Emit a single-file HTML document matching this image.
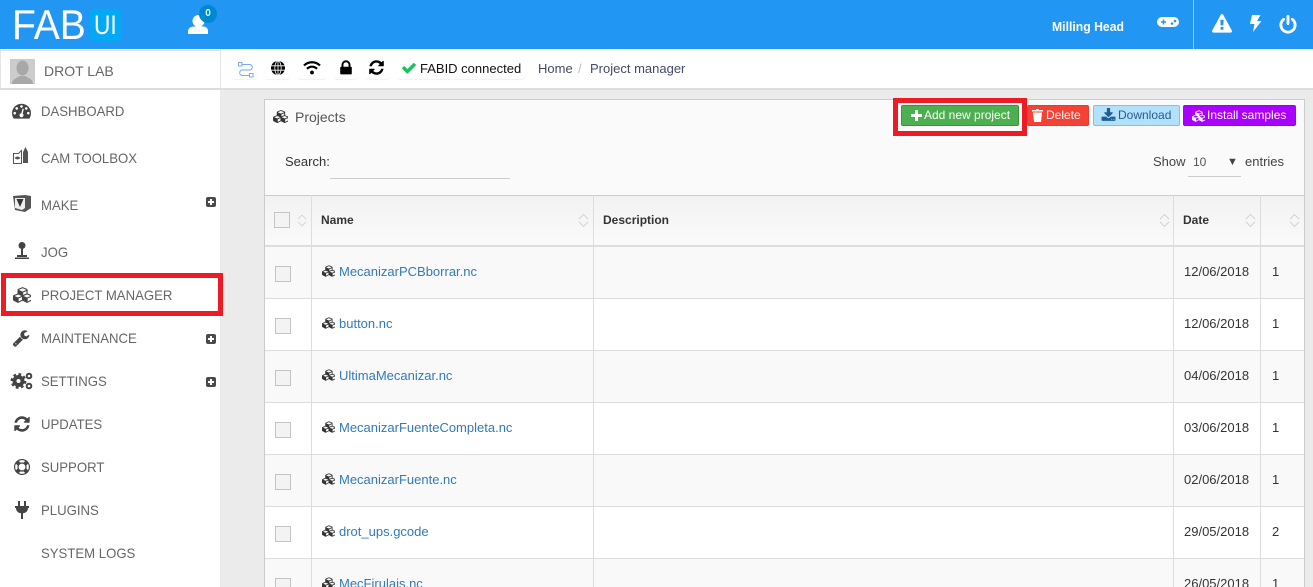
<!DOCTYPE html>
<html><head><meta charset="utf-8"><style>
*{box-sizing:border-box}
html,body{margin:0;padding:0;width:1313px;height:587px;overflow:hidden;background:#ebebeb;font-family:"Liberation Sans",sans-serif;font-size:13px;color:#333}
#wrap{position:relative;width:1313px;height:587px;overflow:hidden;background:#ebebeb}
.a{position:absolute}
svg{position:absolute;display:block;overflow:visible}
.t{position:absolute;white-space:nowrap;line-height:16px}
.m{position:absolute;left:41px;color:#666;font-size:14px;line-height:16px;white-space:nowrap;transform-origin:0 50%;transform:scaleX(.94)}
.pb{position:absolute;left:206px;width:10px;height:10px;background:#4a4a4a;border-radius:2px}
.pb:before{content:"";position:absolute;left:2px;top:4px;width:6px;height:2px;background:#fff}
.pb:after{content:"";position:absolute;left:4px;top:2px;width:2px;height:6px;background:#fff}
.chip{position:absolute;top:59px;height:20px;background:#fff;border-radius:3px;box-shadow:0 1px 1px #f0f0f0}
.btn{position:absolute;top:105px;height:21px;border-radius:2px;color:#fff;font-size:12px;line-height:19px;white-space:nowrap}
.row{position:absolute;left:265px;width:1039px;height:52px;border-bottom:1px solid #ddd}
.v{position:absolute;top:195px;width:1px;height:392px;background:#ddd}
.cb{position:absolute;left:275px;width:16px;height:16px;background:#f3f3f3;border:1px solid #c4c4c4}
.lnk{position:absolute;left:339px;color:#337ab7;font-size:13px;line-height:16px;white-space:nowrap}
.d{position:absolute;left:1184px;color:#333;font-size:13px;line-height:16px}
.n{position:absolute;left:1272px;color:#333;font-size:13px;line-height:16px}
.th{position:absolute;top:212px;font-weight:bold;font-size:12px;line-height:16px;color:#333}
</style></head><body><div id="wrap">
<svg width="0" height="0" style="position:absolute"><defs>
<symbol id="cubes" viewBox="0 0 2048 1792"><path d="M640 1632l384-192v-314l-384 164v342zm-64-454l404-173-404-173-404 173zm1088 454l384-192v-314l-384 164v342zm-64-454l404-173-404-173-404 173zm-448-293l384-165v-266l-384 164v267zm-64-379l441-189-441-189-441 189zm1088 518v416q0 36-19 67t-52 47l-448 224q-25 14-57 14t-57-14l-448-224q-4-2-7-4-2 2-7 4l-448 224q-25 14-57 14t-57-14l-448-224q-33-16-52-47t-19-67v-416q0-38 21.500-70t56.500-48l434-186v-400q0-38 21.500-70t56.500-48l448-192q23-10 50-10t50 10l448 192q35 16 56.500 48t21.500 70v400l434 186q36 16 57 48t21 70z"/></symbol>
<symbol id="sort" viewBox="0 0 12 15"><path d="M1 6l5-5 5 5M1 9l5 5 5-5" fill="none" stroke="#d0d0d0" stroke-width="1"/></symbol>
<symbol id="sync" viewBox="0 0 1792 1792"><path d="M1639 1056q0 5-1 7-64 268-268 434.500t-478 166.500q-146 0-282.500-55t-243.500-157l-129 129q-19 19-45 19t-45-19-19-45v-448q0-26 19-45t45-19h448q26 0 45 19t19 45-19 45l-137 137q71 66 161 102t187 36q134 0 250-65t186-179q11-17 53-117 8-23 30-23h192q13 0 22.500 9.500t9.500 22.500zm25-800v448q0 26-19 45t-45 19h-448q-26 0-45-19t-19-45 19-45l138-138q-148-137-349-137-134 0-250 65t-186 179q-11 17-53 117-8 23-30 23h-199q-13 0-22.500-9.500t-9.500-22.500v-7q65-268 270-434.500t480-166.500q146 0 284 55.500t245 156.500l130-129q19-19 45-19t45 19 19 45z"/></symbol>
</defs></svg>

<!-- header -->
<div class="a" style="left:0;top:0;width:1313px;height:49px;background:#2196f3"></div>
<div class="t" style="left:12px;top:4px;font-size:42px;line-height:42px;color:#fff;transform-origin:0 0;transform:scaleX(.93)">FAB</div>
<div class="a" style="left:90px;top:9px;width:31px;height:32px;background:#03a9f4;border-radius:4px"></div>
<div class="t" style="left:94px;top:10px;font-size:27px;line-height:30px;color:#fff;transform-origin:0 0;transform:scaleX(.84)">UI</div>
<svg style="left:188px;top:14px" width="21" height="21" viewBox="0 0 21 21"><circle cx="10.500" cy="7" r="6" fill="#fff"/><path d="M0 20v-2.500C0 14 3 12.500 6 12.500h9c3 0 5 1.500 5 5V20z" fill="#fff"/></svg>
<div class="a" style="left:199px;top:5px;width:18px;height:18px;border-radius:50%;background:#0288d1;color:#dff;font-size:10px;font-weight:bold;line-height:18px;text-align:center">0</div>
<div class="t" style="left:1052px;top:19px;color:#fff;font-weight:bold;font-size:13px;transform-origin:0 50%;transform:scaleX(.94)">Milling Head</div>
<svg style="left:1157px;top:15px" width="22" height="14" viewBox="0 0 22 14"><rect x="0" y="2" width="22" height="10" rx="5" fill="#fff"/><path d="M4 7h5M6.500 4.500v5" stroke="#2196f3" stroke-width="1.500"/><circle cx="15" cy="8.500" r="1.300" fill="#2196f3"/><circle cx="18" cy="6" r="1.300" fill="#2196f3"/></svg>
<div class="a" style="left:1193px;top:0;width:1px;height:49px;background:#90caf9"></div>
<svg style="left:1212px;top:14px" width="20" height="20" viewBox="0 0 1792 1792" fill="#fff"><path d="M1024 1375v-190q0-14-9.500-23.500t-22.500-9.500h-192q-13 0-22.500 9.500t-9.500 23.500v190q0 14 9.500 23.500t22.500 9.500h192q13 0 22.500-9.500t9.500-23.500zm-2-374l18-459q0-12-10-19-13-11-24-11h-220q-11 0-24 11-10 7-10 21l17 457q0 10 10 16.500t24 6.500h185q14 0 23.500-6.500t10.500-16.500zm-14-934l768 1408q35 63-2 126-17 29-46.500 46t-63.500 17h-1536q-34 0-63.500-17t-46.500-46q-37-63-2-126l768-1408q17-31 47-49t65-18 65 18 47 49z"/></svg>
<svg style="left:1249px;top:15px" width="13" height="17" viewBox="0 0 13 17"><path d="M3 0h8.500L8 6h4.500L4 17l1.500-8H1z" fill="#fff"/></svg>
<svg style="left:1278px;top:15px" width="20" height="20" viewBox="0 0 1792 1792" fill="#fff"><path d="M1664 896q0 156-61 298t-164 245-245 164-298 61-298-61-245-164-164-245-61-298q0-182 80.500-343t226.500-270q43-32 95.500-25t83.500 50q32 42 24.500 94.500t-49.500 84.500q-98 74-151.500 181t-53.500 228q0 104 40.500 198.500t109.500 163.500 163.500 109.500 198.500 40.500 198.500-40.500 163.500-109.500 109.500-163.500 40.500-198.500q0-121-53.500-228t-151.500-181q-42-32-49.500-84.500t24.500-94.500q31-43 84-50t95 25q146 109 226.500 270t80.500 343zm-640-768v640q0 52-38 90t-90 38-90-38-38-90v-640q0-52 38-90t90-38 90 38 38 90z"/></svg>

<!-- sidebar -->
<div class="a" style="left:0;top:49px;width:220px;height:538px;background:#fff"></div>
<div class="a" style="left:0;top:50px;width:221px;height:40px;background:#fff;border:1px solid #e4e4e4;border-bottom:2px solid #ddd"></div>
<div class="a" style="left:10px;top:59px;width:25px;height:25px;background:#ccc;overflow:hidden"><svg style="left:0;top:0" width="25" height="25" viewBox="0 0 25 25"><ellipse cx="12.500" cy="9" rx="6" ry="7.500" fill="#a8a8a8"/><path d="M2 25c0-5 5-6 8-8h5c3 2 8 3 8 8z" fill="#a8a8a8"/></svg></div>
<div class="t" style="left:44px;top:63px;font-size:14px;color:#666">DROT LAB</div>

<!-- sidebar items -->
<svg style="left:12px;top:101px" width="19" height="19" viewBox="0 0 1792 1792" fill="#444"><path d="M384 1152q0-53-37.500-90.500t-90.500-37.500-90.500 37.500-37.500 90.500 37.500 90.500 90.500 37.500 90.500-37.500 37.500-90.500zm192-448q0-53-37.500-90.500t-90.500-37.500-90.500 37.500-37.500 90.500 37.500 90.500 90.500 37.500 90.500-37.500 37.500-90.500zm428 481l101-382q6-26-7.500-48.500t-38.500-29.500-48 6.500-30 39.500l-101 382q-60 5-107 43.500t-63 98.500q-20 77 20 146t117 89 146-20 89-117q16-60-6-117t-72-91zm660-33q0-53-37.500-90.500t-90.500-37.500-90.500 37.500-37.500 90.500 37.500 90.500 90.500 37.500 90.500-37.500 37.500-90.500zm-640-640q0-53-37.500-90.500t-90.500-37.500-90.500 37.500-37.500 90.500 37.500 90.500 90.500 37.500 90.500-37.500 37.500-90.500zm448 192q0-53-37.500-90.500t-90.500-37.500-90.500 37.500-37.500 90.500 37.500 90.500 90.500 37.500 90.500-37.500 37.500-90.500zm320 448q0 261-141 483-19 29-54 29h-1402q-35 0-54-29-141-221-141-483 0-182 71-348t191-286 286-191 348-71 348 71 286 191 191 286 71 348z"/></svg>
<div class="m" style="top:103px">DASHBOARD</div>
<svg style="left:13px;top:147px" width="18" height="17" viewBox="0 0 18 17"><path d="M.5 6.500h5l3-3v13h-8z" fill="#fff" stroke="#555"/><path d="M1.500 11q3-3 6 0-3 3-6 0z" fill="#555"/><path d="M10 16V5l2.500-5L15 5v11z" fill="#555"/></svg>
<div class="m" style="top:150px">CAM TOOLBOX</div>
<svg style="left:13px;top:195px" width="18" height="17" viewBox="0 0 18 17"><path d="M0 1l12-1 6 1v12l-6 4-10-2z" fill="#555"/><path d="M2 3h10v10l-3 2-7-2z" fill="#eee"/><path d="M3.500 4h7l-3.500 8z" fill="#333"/></svg>
<div class="m" style="top:197px">MAKE</div>
<div class="pb" style="top:197px"></div>
<svg style="left:14px;top:242px" width="16" height="17" viewBox="0 0 16 17"><circle cx="8" cy="3.500" r="3.500" fill="#444"/><rect x="7" y="5" width="2" height="8" fill="#444"/><path d="M1 15.500h14v1.500H1zM3 13h10v2H3z" fill="#444"/></svg>
<div class="m" style="top:244px">JOG</div>
<svg style="left:13px;top:287px;fill:#444" width="18" height="16"><use href="#cubes" width="18" height="16"/></svg>
<div class="m" style="top:287px">PROJECT MANAGER</div>
<svg style="left:12px;top:329px" width="18" height="18" viewBox="0 0 1792 1792" fill="#444"><path d="M448 1472q0-26-19-45t-45-19-45 19-19 45 19 45 45 19 45-19 19-45zm644-420l-682 682q-37 37-90 37-52 0-91-37l-106-108q-38-36-38-90 0-53 38-91l681-681q39 98 114.500 173.500t173.500 114.500zm634-435q0 39-23 106-47 134-164.500 217.500t-258.500 83.500q-185 0-316.500-131.500t-131.500-316.500 131.500-316.500 316.500-131.500q58 0 121.500 16.500t107.500 46.500q16 11 16 28t-16 28l-293 169v224l193 107q5-3 79-48.500t135.500-81 70.500-35.500q15 0 23.500 10t8.500 25z"/></svg>
<div class="m" style="top:330px">MAINTENANCE</div>
<div class="pb" style="top:334px"></div>
<svg style="left:11px;top:372px" width="22" height="18" viewBox="0 0 22 18"><circle cx="7.500" cy="9" r="4" fill="none" stroke="#444" stroke-width="4"/><circle cx="7.500" cy="9" r="6.800" fill="none" stroke="#444" stroke-width="2.200" stroke-dasharray="2.800 2.500"/><circle cx="18" cy="4" r="2.300" fill="none" stroke="#444" stroke-width="2"/><circle cx="18" cy="14" r="2.300" fill="none" stroke="#444" stroke-width="2"/></svg>
<div class="m" style="top:373px">SETTINGS</div>
<div class="pb" style="top:377px"></div>
<svg style="left:13px;top:415px;fill:#444" width="18" height="18"><use href="#sync" width="18" height="18"/></svg>
<div class="m" style="top:416px">UPDATES</div>
<svg style="left:14px;top:459px" width="16" height="16" viewBox="0 0 1792 1792" fill="#444"><path d="M896 0q182 0 348 71t286 191 191 286 71 348-71 348-191 286-286 191-348 71-348-71-286-191-191-286-71-348 71-348 191-286 286-191 348-71zm0 128q-190 0-361 90l194 194q82-28 167-28t167 28l194-194q-171-90-361-90zm-678 1129l194-194q-28-82-28-167t28-167l-194-194q-90 171-90 361t90 361zm678 407q190 0 361-90l-194-194q-82 28-167 28t-167-28l-194 194q171 90 361 90zm0-384q159 0 271.500-112.500t112.500-271.500-112.500-271.500-271.500-112.500-271.500 112.500-112.500 271.500 112.500 271.500 271.500 112.500zm484-217l194 194q90-171 90-361t-90-361l-194 194q28 82 28 167t-28 167z"/></svg>
<div class="m" style="top:459px">SUPPORT</div>
<svg style="left:15px;top:501px" width="14" height="18" viewBox="0 0 14 18"><rect x="3" y="0" width="2" height="5" fill="#444"/><rect x="9" y="0" width="2" height="5" fill="#444"/><path d="M0 5h14v2h-1c0 3-2 5-5 5.300V18H6v-5.700C3 12 1 10 1 7H0z" fill="#444"/></svg>
<div class="m" style="top:502px">PLUGINS</div>
<div class="m" style="top:545px">SYSTEM LOGS</div>
<!-- sidebar highlight -->
<div class="a" style="left:1px;top:273px;width:222px;height:43px;border:5px solid #ed1c24"></div>

<!-- topbar -->
<div class="a" style="left:221px;top:50px;width:1092px;height:40px;background:#fff;border-bottom:2px solid #ddd"></div>
<div class="chip" style="left:233px;width:24px"></div>
<div class="chip" style="left:265px;width:25px"></div>
<div class="chip" style="left:298px;width:28px"></div>
<div class="chip" style="left:334px;width:23px"></div>
<div class="chip" style="left:365px;width:24px"></div>
<div class="chip" style="left:397px;width:128px"></div>
<svg style="left:238px;top:62px" width="17" height="17" viewBox="0 0 17 17"><g fill="none" stroke="#7aa7ee"><rect x=".5" y=".5" width="3.500" height="3.500"/><rect x="11.500" y="11.500" width="3.500" height="3.500"/><path d="M4 2.500h8a2.800 2.800 0 0 1 0 5.500H4a2.800 2.800 0 0 0 0 5.500h7.500"/></g></svg>
<svg style="left:271px;top:61px" width="14" height="14" viewBox="0 0 14 14"><circle cx="7" cy="7" r="7" fill="#000"/><path d="M0 4.800h14M0 9.200h14M7 0v14" stroke="#fff" stroke-width=".8"/><ellipse cx="7" cy="7" rx="3.200" ry="7" fill="none" stroke="#fff" stroke-width=".8"/></svg>
<svg style="left:303px;top:60px" width="18" height="15" viewBox="0 0 18 14"><path d="M1 5a11.500 11.500 0 0 1 16 0M4 8.300a7 7 0 0 1 10 0" fill="none" stroke="#000" stroke-width="2.200"/><circle cx="9" cy="12" r="1.900" fill="#000"/></svg>
<svg style="left:337px;top:59px" width="18" height="18" viewBox="0 0 1792 1792" fill="#000"><path d="M640 768h512v-192q0-106-75-181t-181-75-181 75-75 181v192zm832 96v576q0 40-28 68t-68 28h-960q-40 0-68-28t-28-68v-576q0-40 28-68t68-28h32v-192q0-184 132-316t316-132 316 132 132 316v192h32q40 0 68 28t28 68z"/></svg>
<svg style="left:368px;top:59px;fill:#000" width="17" height="17"><use href="#sync" width="17" height="17"/></svg>
<svg style="left:401px;top:60px" width="16" height="16" viewBox="0 0 1792 1792" fill="#1fbf5f"><path d="M1671 566q0 40-28 68l-724 724-136 136q-28 28-68 28t-68-28l-136-136-362-362q-28-28-28-68t28-68l136-136q28-28 68-28t68 28l294 295 656-657q28-28 68-28t68 28l136 136q28 28 28 68z"/></svg>
<div class="t" style="left:420px;top:61px;font-size:13px;color:#111">FABID connected</div>
<div class="t" style="left:538px;top:61px;font-size:13px;color:#444a66">Home</div>
<div class="t" style="left:578px;top:61px;font-size:13px;color:#bbb">/</div>
<div class="t" style="left:590px;top:61px;font-size:13px;color:#444a66">Project manager</div>

<!-- panel -->
<div class="a" style="left:264px;top:99px;width:1041px;height:488px;background:#fafafa;border:1px solid #ccc;border-bottom:0"></div>
<svg style="left:273px;top:110px;fill:#333" width="15" height="13"><use href="#cubes" width="15" height="13"/></svg>
<div class="t" style="left:295px;top:109px;font-size:14px;color:#555">Projects</div>

<div class="a" style="left:893px;top:98px;width:134px;height:38px;border:5px solid #ed1c24"></div>
<div class="btn" style="left:901px;width:118px;background:#4caf50;border:1px solid #3d9140;padding-left:9px"><svg style="left:9px;top:4px" width="11" height="11" viewBox="0 0 11 11"><path d="M4 0h3v4h4v3H7v4H4V7H0V4h4z" fill="#fff"/></svg><span style="margin-left:13px">Add new project</span></div>
<div class="btn" style="left:1027px;width:62px;background:#f44336;border:1px solid #ea3a2e"><svg style="left:4px;top:3px" width="11" height="13" viewBox="0 0 11 13"><path d="M0 1h4V0h3v1h4v1.500H0zM1 3.500h9L9 13H2z" fill="#fff"/></svg><span style="position:absolute;left:18px">Delete</span></div>
<div class="btn" style="left:1093px;width:87px;background:#b3e0fa;border:1px solid #7cc3ec;color:#1d5f95"><svg style="left:7px;top:2px;fill:#1d5f95" width="15" height="15" viewBox="0 0 1792 1792"><path d="M1344 1344q0-26-19-45t-45-19-45 19-19 45 19 45 45 19 45-19 19-45zm256 0q0-26-19-45t-45-19-45 19-19 45 19 45 45 19 45-19 19-45zm128-224v320q0 40-28 68t-68 28h-1472q-40 0-68-28t-28-68v-320q0-40 28-68t68-28h465l135 136q58 56 136 56t136-56l136-136h464q40 0 68 28t28 68zm-325-569q17 41-14 70l-448 448q-18 19-45 19t-45-19l-448-448q-31-29-14-70 17-39 59-39h256v-448q0-26 19-45t45-19h256q26 0 45 19t19 45v448h256q42 0 59 39z"/></svg><span style="position:absolute;left:24px">Download</span></div>
<div class="btn" style="left:1183px;width:113px;background:#aa00ff;border:1px solid #a100f0"><svg style="left:8px;top:4px;fill:#fff" width="13" height="12"><use href="#cubes" width="13" height="12"/></svg><span style="position:absolute;left:23px">Install samples</span></div>

<div class="t" style="left:285px;top:154px;font-size:13px;color:#333">Search:</div>
<div class="a" style="left:330px;top:178px;width:180px;height:1px;background:#ccc"></div>
<div class="t" style="left:1153px;top:154px;font-size:13px;color:#444">Show</div>
<div class="t" style="left:1193px;top:154px;font-size:12px;color:#555">10</div>
<div class="t" style="left:1227px;top:154px;font-size:11px;color:#444">&#9660;</div>
<div class="a" style="left:1188px;top:176px;width:53px;height:1px;background:#ccc"></div>
<div class="t" style="left:1245px;top:154px;font-size:13px;color:#444">entries</div>

<!-- table -->
<div class="a" style="left:265px;top:195px;width:1039px;height:52px;background:linear-gradient(#f2f2f2,#fafafa);border-top:1px solid #ccc;border-bottom:2px solid #ddd"></div>
<div class="row" style="top:247px;background:#f9f9f9"></div>
<div class="row" style="top:299px;background:#fff"></div>
<div class="row" style="top:351px;background:#f9f9f9"></div>
<div class="row" style="top:403px;background:#fff"></div>
<div class="row" style="top:455px;background:#f9f9f9"></div>
<div class="row" style="top:507px;background:#fff"></div>
<div class="row" style="top:559px;background:#f9f9f9"></div>
<div class="v" style="left:311px"></div><div class="v" style="left:593px"></div><div class="v" style="left:1173px"></div><div class="v" style="left:1260px"></div>

<div class="cb" style="left:274px;top:212px"></div>
<svg style="left:297px;top:213px" width="10" height="15"><use href="#sort" width="10" height="15"/></svg>
<div class="th" style="left:321px">Name</div>
<svg style="left:578px;top:213px" width="11" height="15"><use href="#sort" width="11" height="15"/></svg>
<div class="th" style="left:603px">Description</div>
<svg style="left:1159px;top:213px" width="11" height="15"><use href="#sort" width="11" height="15"/></svg>
<div class="th" style="left:1183px">Date</div>
<svg style="left:1245px;top:213px" width="11" height="15"><use href="#sort" width="11" height="15"/></svg>
<svg style="left:1289px;top:213px" width="11" height="15"><use href="#sort" width="11" height="15"/></svg>

<div class="cb" style="top:266px"></div><svg style="left:322px;top:265px;fill:#333" width="13" height="12"><use href="#cubes" width="13" height="12"/></svg><div class="lnk" style="top:264px">MecanizarPCBborrar.nc</div><div class="d" style="top:264px">12/06/2018</div><div class="n" style="top:264px">1</div>
<div class="cb" style="top:318px"></div><svg style="left:322px;top:317px;fill:#333" width="13" height="12"><use href="#cubes" width="13" height="12"/></svg><div class="lnk" style="top:316px">button.nc</div><div class="d" style="top:316px">12/06/2018</div><div class="n" style="top:316px">1</div>
<div class="cb" style="top:370px"></div><svg style="left:322px;top:369px;fill:#333" width="13" height="12"><use href="#cubes" width="13" height="12"/></svg><div class="lnk" style="top:368px">UltimaMecanizar.nc</div><div class="d" style="top:368px">04/06/2018</div><div class="n" style="top:368px">1</div>
<div class="cb" style="top:422px"></div><svg style="left:322px;top:421px;fill:#333" width="13" height="12"><use href="#cubes" width="13" height="12"/></svg><div class="lnk" style="top:420px">MecanizarFuenteCompleta.nc</div><div class="d" style="top:420px">03/06/2018</div><div class="n" style="top:420px">1</div>
<div class="cb" style="top:474px"></div><svg style="left:322px;top:473px;fill:#333" width="13" height="12"><use href="#cubes" width="13" height="12"/></svg><div class="lnk" style="top:472px">MecanizarFuente.nc</div><div class="d" style="top:472px">02/06/2018</div><div class="n" style="top:472px">1</div>
<div class="cb" style="top:526px"></div><svg style="left:322px;top:525px;fill:#333" width="13" height="12"><use href="#cubes" width="13" height="12"/></svg><div class="lnk" style="top:524px">drot_ups.gcode</div><div class="d" style="top:524px">29/05/2018</div><div class="n" style="top:524px">2</div>
<div class="cb" style="top:578px"></div><svg style="left:322px;top:577px;fill:#333" width="13" height="12"><use href="#cubes" width="13" height="12"/></svg><div class="lnk" style="top:576px">MecFirulais.nc</div><div class="d" style="top:576px">26/05/2018</div><div class="n" style="top:576px">1</div>
</div></body></html>
